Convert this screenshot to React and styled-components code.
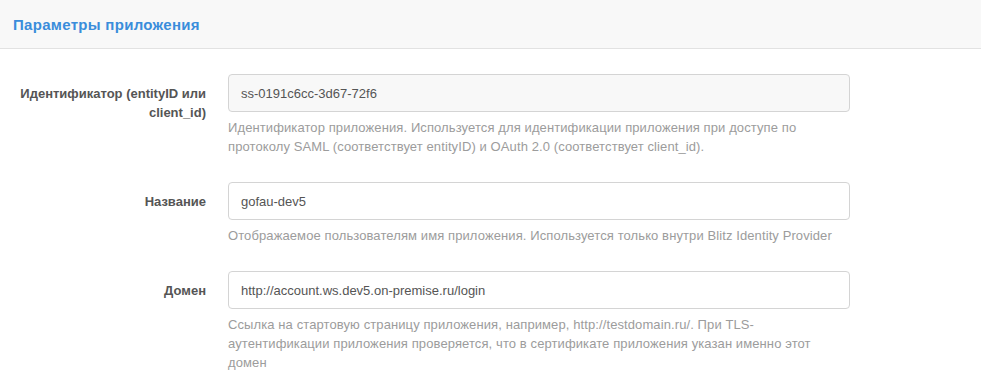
import React from "react";
import styled, { createGlobalStyle } from "styled-components";

const GlobalStyle = createGlobalStyle`
body {
  margin: 0;
  background: #fff;
  font-family: "Liberation Sans", Arial, sans-serif;
}
`

const Panel = styled.div`
width: 981px;
height: 381px;
overflow: hidden;
`

const PanelHeader = styled.div`
height: 48px;
background: #f8f8f8;
border-bottom: 1px solid #e2e2e2;
display: flex;
align-items: center;
padding: 0 13px;
box-sizing: content-box;
`

const PanelTitle = styled.div`
color: #3a8ddb;
font-size: 15px;
letter-spacing: 0.3px;
font-weight: bold;
`

const PanelBody = styled.div`
padding-top: 25px;
`

const FormRow = styled.div`
display: grid;
grid-template-columns: 206px 622px;
column-gap: 22px;
margin-bottom: 26px;
`

const Label = styled.div`
padding: 10px 0 0 15px;
text-align: right;
font-size: 13px;
line-height: 19px;
font-weight: bold;
color: #555;
`

const Field = styled.div`
display: flex;
flex-direction: column;
`

const Input = styled.input`
height: 38px;
box-sizing: border-box;
border: 1px solid #d4d4d4;
border-radius: 4px;
padding: 0 12px;
font-family: inherit;
font-size: 13px;
color: #555;
background: ${p => (p.readOnly ? "#f8f8f8" : "#fff")};
outline: none;
`

const Help = styled.div`
margin-top: 6px;
font-size: 13px;
letter-spacing: 0.1px;
line-height: 19px;
color: #9c9c9c;
`

const fields = [
  {
    label: "Идентификатор (entityID или client_id)",
    value: "ss-0191c6cc-3d67-72f6",
    readOnly: true,
    help: "Идентификатор приложения. Используется для идентификации приложения при доступе по протоколу SAML (соответствует entityID) и OAuth 2.0 (соответствует client_id).",
  },
  {
    label: "Название",
    value: "gofau-dev5",
    help: "Отображаемое пользователям имя приложения. Используется только внутри Blitz Identity Provider",
  },
  {
    label: "Домен",
    value: "http://account.ws.dev5.on-premise.ru/login",
    help: "Ссылка на стартовую страницу приложения, например, http://testdomain.ru/. При TLS-аутентификации приложения проверяется, что в сертификате приложения указан именно этот домен",
  },
];

const App = () => {
  return (
    <Panel>
      <GlobalStyle />
      <PanelHeader>
        <PanelTitle>Параметры приложения</PanelTitle>
      </PanelHeader>
      <PanelBody>
        {fields.map(f => (
          <FormRow key={f.label}>
            <Label>{f.label}</Label>
            <Field>
              <Input defaultValue={f.value} readOnly={f.readOnly} />
              <Help>{f.help}</Help>
            </Field>
          </FormRow>
        ))}
      </PanelBody>
    </Panel>
  )
}

export default App;
